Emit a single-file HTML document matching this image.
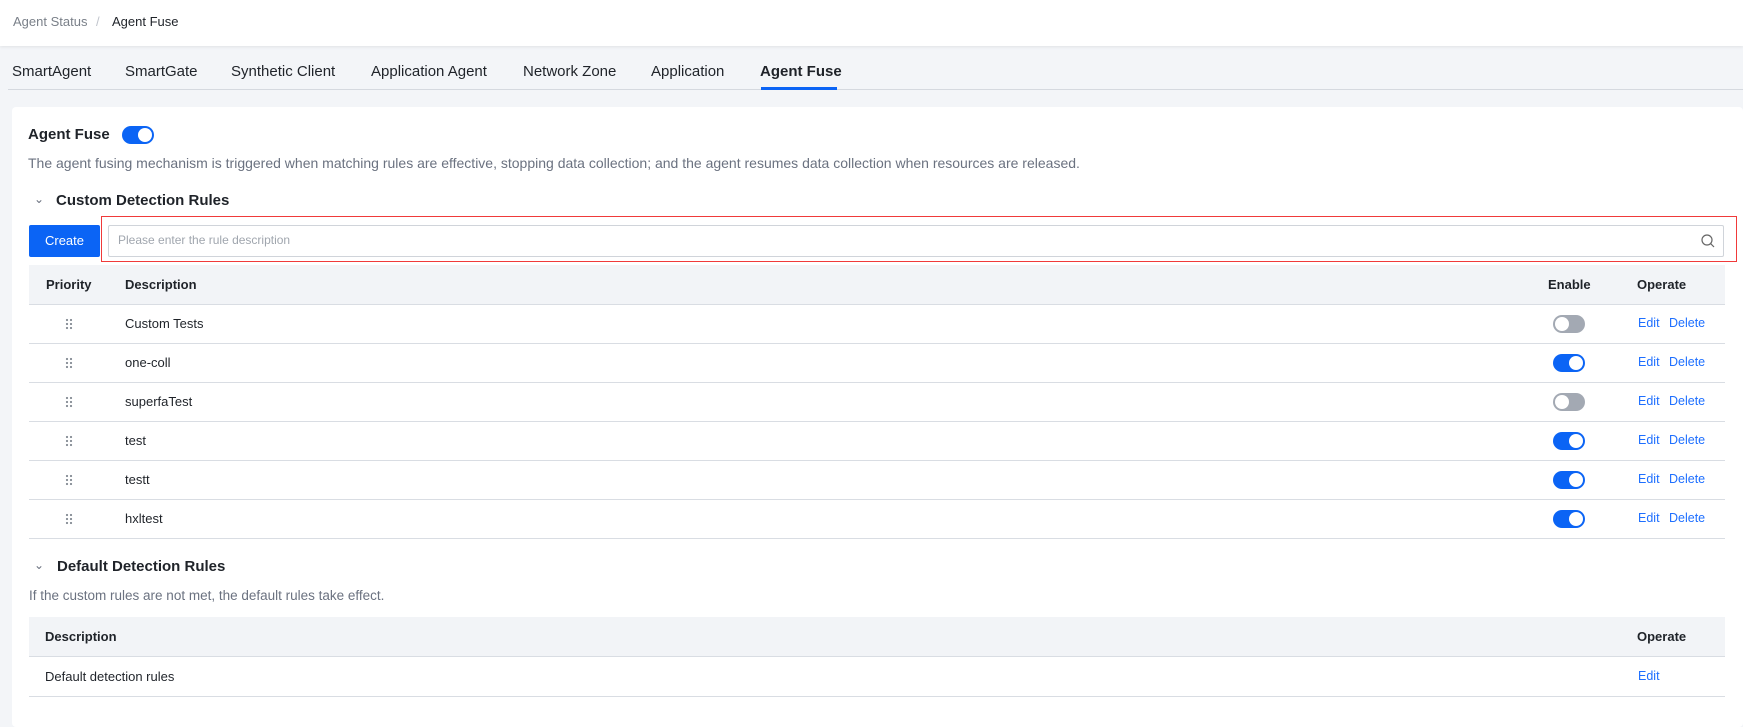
<!DOCTYPE html><html><head><style>
*{margin:0;padding:0;box-sizing:border-box}
body{width:1743px;height:716px;overflow:hidden;background:#f3f5f8;font-family:"Liberation Sans",sans-serif;color:#1f2329;position:relative}
.a{position:absolute;white-space:nowrap}
.hdr{position:absolute;left:0;top:0;width:1743px;height:46px;background:#fff;box-shadow:0 1px 3px rgba(0,0,0,.08)}
.tab{position:absolute;top:63px;font-size:15px;color:#1f2329}
.card{position:absolute;left:12px;top:107px;width:1731px;height:620px;background:#fff;border-radius:4px}
.tgl{position:absolute;width:32px;height:18px;border-radius:9px;background:#0b64f5}
.tgl::after{content:"";position:absolute;top:2px;right:2px;width:14px;height:14px;border-radius:50%;background:#fff}
.tgl.off{background:#a3a9b3}.tgl.off::after{right:auto;left:2px}
.line{position:absolute;left:29px;width:1696px;height:1px;background:#d9dde3}
.th{position:absolute;left:29px;width:1696px;background:#f2f4f7}
.b{font-weight:bold;font-size:13px}
.t{font-size:13px}
.lk{font-size:12.5px;color:#1e6fff}
.drag{position:absolute;left:65px;width:8px;height:12px;background-image:radial-gradient(circle,#8a9099 1px,transparent 1.3px);background-size:4px 4px}
</style></head><body>
<div class="hdr"></div>
<div class="a" style="left:13px;top:14px;font-size:13px;color:#7a8089">Agent Status</div>
<div class="a" style="top:14px;font-size:13px;color:#c0c4cc;left:96px">/</div>
<div class="a" style="left:112px;top:14px;font-size:13px">Agent Fuse</div>
<div class="tab a" style="left:12px">SmartAgent</div>
<div class="tab a" style="left:125px">SmartGate</div>
<div class="tab a" style="left:231px">Synthetic Client</div>
<div class="tab a" style="left:371px">Application Agent</div>
<div class="tab a" style="left:523px">Network Zone</div>
<div class="tab a" style="left:651px">Application</div>
<div class="tab a" style="left:760px;font-weight:bold">Agent Fuse</div>
<div class="a" style="left:8px;top:89px;width:1735px;height:1px;background:#d5d9df"></div>
<div class="a" style="left:761px;top:87px;width:76px;height:3px;background:#0b64f5"></div>
<div class="card"></div>
<div class="a" style="left:28px;top:126px;font-size:15px;font-weight:bold">Agent Fuse</div>
<div class="tgl" style="left:122px;top:126px"></div>
<div class="a" style="left:28px;top:155px;font-size:14px;color:#6b7280">The agent fusing mechanism is triggered when matching rules are effective, stopping data collection; and the agent resumes data collection when resources are released.</div>
<div class="a" style="left:34px;top:192px;font-size:12px;color:#6b7280">&#8964;</div>
<div class="a" style="left:56px;top:192px;font-size:15px;font-weight:bold">Custom Detection Rules</div>
<div class="a" style="left:29px;top:225px;width:71px;height:32px;background:#0b64f5;border-radius:2px;color:#fff;font-size:13px;text-align:center;line-height:32px">Create</div>
<div class="a" style="left:101px;top:216px;width:1636px;height:46px;border:1px solid #f03a3a"></div>
<div class="a" style="left:108px;top:225px;width:1616px;height:32px;border:1px solid #d0d4da;border-radius:2px"></div>
<div class="a" style="left:118px;top:233px;font-size:12px;color:#a0a6ae">Please enter the rule description</div>
<svg class="a" style="left:1700px;top:233px" width="16" height="16" viewBox="0 0 16 16"><circle cx="7" cy="7" r="5" fill="none" stroke="#666" stroke-width="1.2"/><path d="M10.6 10.6L14 14" stroke="#666" stroke-width="1.2"/></svg>
<div class="th" style="top:265px;height:39px"></div>
<div class="a b" style="left:46px;top:277px">Priority</div>
<div class="a b" style="left:125px;top:277px">Description</div>
<div class="a b" style="left:1548px;top:277px">Enable</div>
<div class="a b" style="left:1637px;top:277px">Operate</div>
<div class="line" style="top:304px"></div>
<div class="drag" style="top:318px"></div><div class="a t" style="left:125px;top:316px">Custom Tests</div><div class="tgl off" style="left:1553px;top:315px"></div><div class="a lk" style="left:1638px;top:316px">Edit</div><div class="a lk" style="left:1669px;top:316px">Delete</div>
<div class="line" style="top:343px"></div>
<div class="drag" style="top:357px"></div><div class="a t" style="left:125px;top:355px">one-coll</div><div class="tgl" style="left:1553px;top:354px"></div><div class="a lk" style="left:1638px;top:355px">Edit</div><div class="a lk" style="left:1669px;top:355px">Delete</div>
<div class="line" style="top:382px"></div>
<div class="drag" style="top:396px"></div><div class="a t" style="left:125px;top:394px">superfaTest</div><div class="tgl off" style="left:1553px;top:393px"></div><div class="a lk" style="left:1638px;top:394px">Edit</div><div class="a lk" style="left:1669px;top:394px">Delete</div>
<div class="line" style="top:421px"></div>
<div class="drag" style="top:435px"></div><div class="a t" style="left:125px;top:433px">test</div><div class="tgl" style="left:1553px;top:432px"></div><div class="a lk" style="left:1638px;top:433px">Edit</div><div class="a lk" style="left:1669px;top:433px">Delete</div>
<div class="line" style="top:460px"></div>
<div class="drag" style="top:474px"></div><div class="a t" style="left:125px;top:472px">testt</div><div class="tgl" style="left:1553px;top:471px"></div><div class="a lk" style="left:1638px;top:472px">Edit</div><div class="a lk" style="left:1669px;top:472px">Delete</div>
<div class="line" style="top:499px"></div>
<div class="drag" style="top:513px"></div><div class="a t" style="left:125px;top:511px">hxltest</div><div class="tgl" style="left:1553px;top:510px"></div><div class="a lk" style="left:1638px;top:511px">Edit</div><div class="a lk" style="left:1669px;top:511px">Delete</div>
<div class="line" style="top:538px"></div>
<div class="a" style="left:34px;top:558px;font-size:12px;color:#6b7280">&#8964;</div>
<div class="a" style="left:57px;top:558px;font-size:15px;font-weight:bold">Default Detection Rules</div>
<div class="a" style="left:29px;top:588px;font-size:13.5px;color:#6b7280">If the custom rules are not met, the default rules take effect.</div>
<div class="th" style="top:617px;height:39px"></div>
<div class="a b" style="left:45px;top:629px">Description</div>
<div class="a b" style="left:1637px;top:629px">Operate</div>
<div class="line" style="top:656px"></div>
<div class="a t" style="left:45px;top:669px">Default detection rules</div>
<div class="a lk" style="left:1638px;top:669px">Edit</div>
<div class="line" style="top:696px"></div>
</body></html>
